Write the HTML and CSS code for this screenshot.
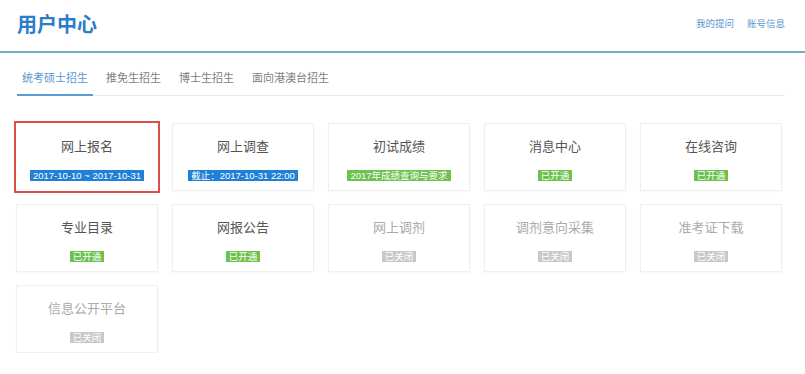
FILE: index.html
```html
<!DOCTYPE html>
<html lang="zh-CN">
<head>
    <meta charset="UTF-8">
    <meta name="viewport" content="width=device-width, initial-scale=1.0">
    <title>用户中心</title>
    <link rel="stylesheet" href="styles.css">
</head>
<body>
    <div class="header">
        <h1 class="page-title">用户中心</h1>
        <div class="header-links">
            <a href="#">我的提问</a>
            <a href="#">账号信息</a>
        </div>
    </div>

    <div class="tabs">
        <a href="#" class="tab active">统考硕士招生</a>
        <a href="#" class="tab">推免生招生</a>
        <a href="#" class="tab">博士生招生</a>
        <a href="#" class="tab">面向港澳台招生</a>
    </div>

    <div class="cards">
        <div class="card selected">
            <div class="card-title">网上报名</div>
            <span class="badge blue">2017-10-10 ~ 2017-10-31</span>
        </div>
        <div class="card">
            <div class="card-title">网上调查</div>
            <span class="badge blue">截止：2017-10-31 22:00</span>
        </div>
        <div class="card">
            <div class="card-title">初试成绩</div>
            <span class="badge green">2017年成绩查询与要求</span>
        </div>
        <div class="card">
            <div class="card-title">消息中心</div>
            <span class="badge green">已开通</span>
        </div>
        <div class="card">
            <div class="card-title">在线咨询</div>
            <span class="badge green">已开通</span>
        </div>

        <div class="card">
            <div class="card-title">专业目录</div>
            <span class="badge green">已开通</span>
        </div>
        <div class="card">
            <div class="card-title">网报公告</div>
            <span class="badge green">已开通</span>
        </div>
        <div class="card disabled">
            <div class="card-title">网上调剂</div>
            <span class="badge gray">已关闭</span>
        </div>
        <div class="card disabled">
            <div class="card-title">调剂意向采集</div>
            <span class="badge gray">已关闭</span>
        </div>
        <div class="card disabled">
            <div class="card-title">准考证下载</div>
            <span class="badge gray">已关闭</span>
        </div>

        <div class="card disabled">
            <div class="card-title">信息公开平台</div>
            <span class="badge gray">已关闭</span>
        </div>
    </div>
</body>
</html>
```

FILE: styles.css
```css
body {
    font-family: "Liberation Sans", "Noto Sans CJK SC", sans-serif;
    background: #fff;
    color: #555;
    margin: 0;
    padding: 0;
}

a {
    text-decoration: none;
}

.header {
    display: flex;
    justify-content: space-between;
    align-items: center;
    height: 51px;
    padding: 0 20px 0 17px;
    border-bottom: 2px solid #78a9ca;
}

.page-title {
    margin: 0;
    font-size: 20px;
    font-weight: bold;
    color: #2b7cc9;
    line-height: 24px;
    padding-bottom: 2px;
}

.header-links {
    display: flex;
    gap: 13px;
    padding-bottom: 5px;
}

.header-links a {
    font-size: 9.5px;
    color: #5a95cf;
}

.tabs {
    display: flex;
    gap: 8px;
    margin: 16px 20px 0 17px;
    border-bottom: 1px solid #ebebeb;
}

.tab {
    font-size: 11px;
    line-height: 16px;
    color: #808080;
    padding: 1px 5px 8px;
    margin-bottom: -1px;
    border-bottom: 2px solid transparent;
}

.tab.active {
    color: #5b97d0;
    border-bottom-color: #5b9bd5;
}

.cards {
    display: grid;
    grid-template-columns: repeat(5, 142px);
    grid-auto-rows: 68px;
    column-gap: 14px;
    row-gap: 13px;
    padding: 27px 0 0 16px;
}

.card {
    display: flex;
    flex-direction: column;
    align-items: center;
    border: 1px solid #f0f0f0;
    box-shadow: 0 1px 2px rgba(0, 0, 0, 0.04);
    box-sizing: border-box;
    padding-top: 13px;
}

.card.selected {
    outline: 2px solid #d9504a;
    border-color: transparent;
}

.card-title {
    font-size: 13px;
    line-height: 20px;
    color: #555;
}

.card.disabled .card-title {
    color: #aaa;
}

.badge {
    margin-top: 13px;
    font-size: 9.5px;
    line-height: 11px;
    padding: 0 3px;
    color: #fff;
}

.badge.blue {
    background-color: #1f80d6;
}

.badge.green {
    background-color: #6cc24d;
}

.badge.gray {
    background-color: #c8c8c8;
}
```
